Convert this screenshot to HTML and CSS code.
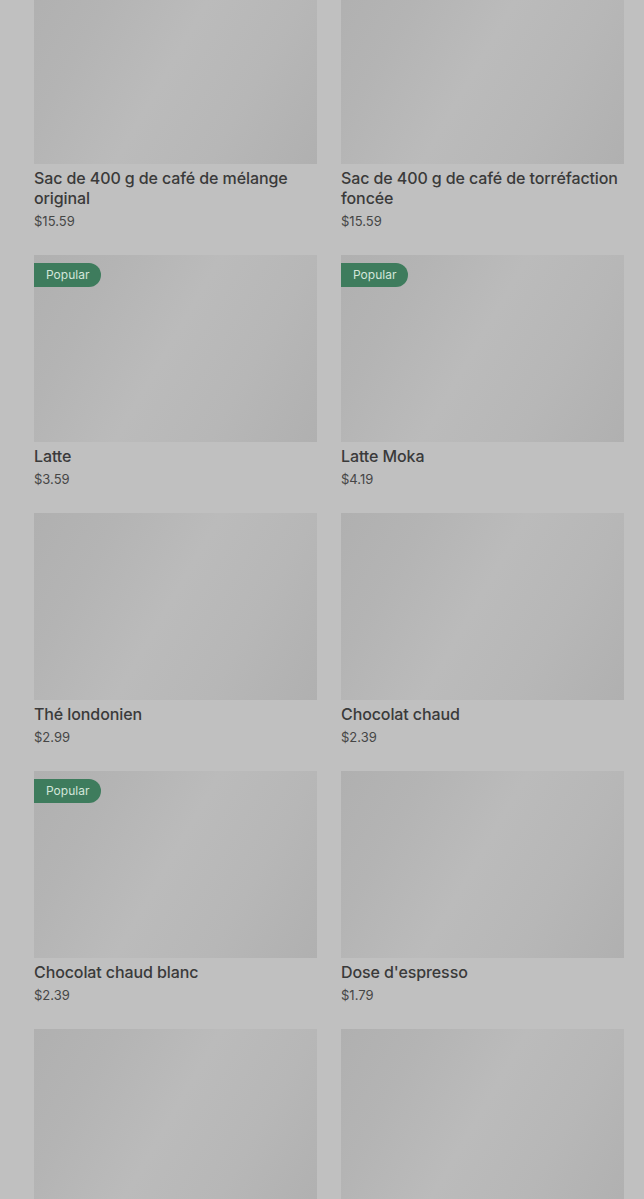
FILE: index.html
```html
<!DOCTYPE html>
<html lang="fr">
<head>
  <meta charset="UTF-8" />
  <meta name="viewport" content="width=device-width, initial-scale=1.0"/>
  <title>Menu</title>
  <link rel="stylesheet" href="styles.css">
</head>
<body>

  <main class="products">

    <div class="product">
      <div class="thumb"></div>
      <h3 class="name">Sac de 400 g de café de mélange original</h3>
      <p class="price">$15.59</p>
    </div>

    <div class="product">
      <div class="thumb"></div>
      <h3 class="name">Sac de 400 g de café de torréfaction foncée</h3>
      <p class="price">$15.59</p>
    </div>

    <div class="product">
      <div class="thumb"><span class="badge">Popular</span></div>
      <h3 class="name">Latte</h3>
      <p class="price">$3.59</p>
    </div>

    <div class="product">
      <div class="thumb"><span class="badge">Popular</span></div>
      <h3 class="name">Latte Moka</h3>
      <p class="price">$4.19</p>
    </div>

    <div class="product">
      <div class="thumb"></div>
      <h3 class="name">Thé londonien</h3>
      <p class="price">$2.99</p>
    </div>

    <div class="product">
      <div class="thumb"></div>
      <h3 class="name">Chocolat chaud</h3>
      <p class="price">$2.39</p>
    </div>

    <div class="product">
      <div class="thumb"><span class="badge">Popular</span></div>
      <h3 class="name">Chocolat chaud blanc</h3>
      <p class="price">$2.39</p>
    </div>

    <div class="product">
      <div class="thumb"></div>
      <h3 class="name">Dose d'espresso</h3>
      <p class="price">$1.79</p>
    </div>

    <div class="product">
      <div class="thumb"></div>
    </div>

    <div class="product">
      <div class="thumb"></div>
    </div>

  </main>

</body>
</html>
```

FILE: styles.css
```css
body {
  margin: 0;
  background: #c0c0c0;
  font-family: Inter, "Liberation Sans", sans-serif;
  color: #393939;
  overflow: hidden;
}

.products {
  display: grid;
  grid-template-columns: 283px 283px;
  column-gap: 24px;
  row-gap: 24px;
  padding-left: 34px;
  margin-top: -23px;
}

.thumb {
  position: relative;
  height: 187px;
  background: linear-gradient(120deg, #b0b0b0 0%, #b4b4b4 22%, #bbbbbb 48%, #b7b7b7 72%, #b0b0b0 100%);
}

.badge {
  position: absolute;
  top: 8px;
  left: 0;
  height: 24px;
  line-height: 24px;
  padding: 0 12px;
  background: #3e7c5d;
  color: #d3e6da;
  font-size: 12px;
  border-radius: 0 12px 12px 0;
}

.name {
  margin: 4px 0 0;
  font-size: 16px;
  line-height: 20px;
  font-weight: 500;
  letter-spacing: -0.1px;
  color: #3a3a3a;
}

.price {
  margin: 3px 0 0;
  font-size: 13px;
  line-height: 20px;
  color: #464646;
}
```
